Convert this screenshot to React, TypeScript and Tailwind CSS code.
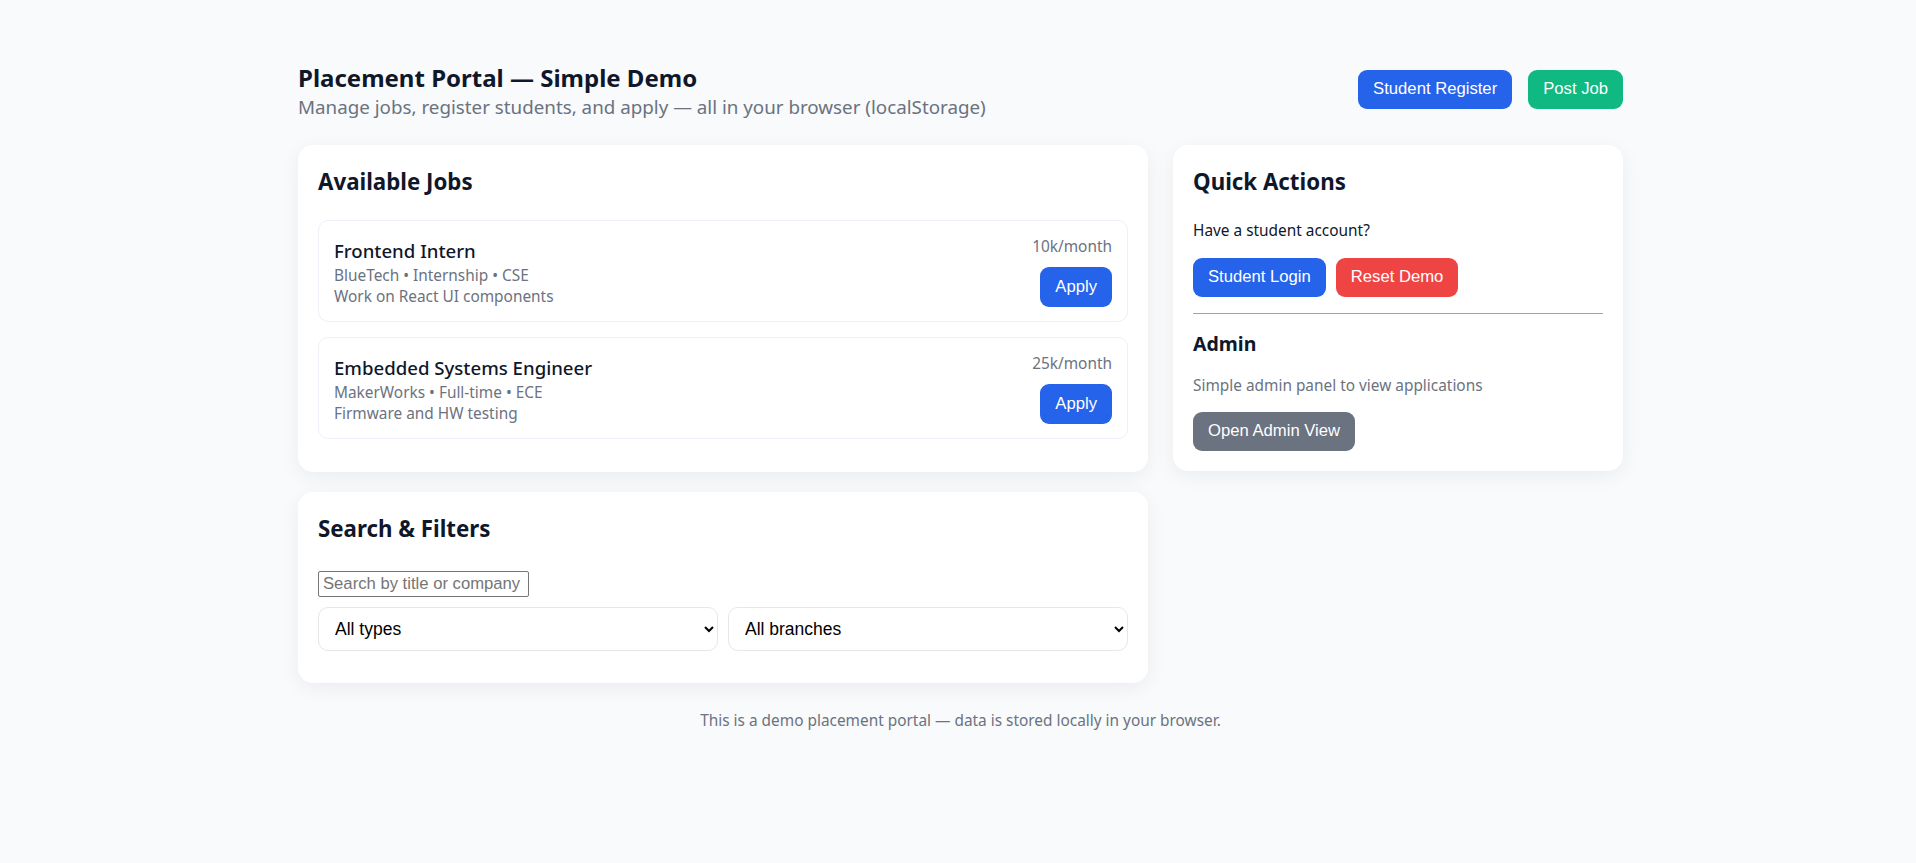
const jobs = [
  { title: "Frontend Intern", meta: "BlueTech • Internship • CSE", desc: "Work on React UI components", pay: "10k/month" },
  { title: "Embedded Systems Engineer", meta: "MakerWorks • Full-time • ECE", desc: "Firmware and HW testing", pay: "25k/month" },
];

const btn = "h-[39px] px-[15px] rounded-[9px] text-white font-['Liberation_Sans',Arial,sans-serif] text-[16.67px] leading-none";
const card = "bg-white rounded-[15px] shadow-[0_5px_20px_rgba(15,23,42,0.06)] px-[20px] pt-[20px]";
const heading = "text-[22.3px] font-bold leading-[30px] mt-[2px]";

export default function App() {
  return (
    <div className="min-h-screen bg-[#f8fafc] font-['Noto_Sans',sans-serif] text-[#0f172a]">
      <div className="ml-[298px] w-[1325px] pt-[62px]">
        <header className="flex items-start justify-between">
          <div>
            <h1 className="text-[24px] font-bold leading-[32px]">Placement Portal — Simple Demo</h1>
            <p className="text-[18.8px] leading-[26px] text-[#6b7280]">
              Manage jobs, register students, and apply — all in your browser (localStorage)
            </p>
          </div>
          <div className="flex gap-[16px] mt-[8px]">
            <button className={`${btn} bg-[#2563eb]`}>Student Register</button>
            <button className={`${btn} bg-[#10b981]`}>Post Job</button>
          </div>
        </header>

        <div className="mt-[25px] grid grid-cols-[850px_450px] gap-[25px] items-start">
          <div className="flex flex-col gap-[20px]">
            <section className={`${card} pb-[33px]`}>
              <h2 className={`${heading} mb-[23px]`}>Available Jobs</h2>
              <div className="flex flex-col gap-[15px]">
                {jobs.map((j) => (
                  <div key={j.title} className="flex items-start justify-between border border-[#edf0f7] rounded-[10px] px-[15px] pt-[16px] h-[102px]">
                    <div>
                      <div className="text-[18.6px] font-medium leading-[28px]">{j.title}</div>
                      <div className="text-[15.4px] leading-[21px] text-[#6b7280]">{j.meta}</div>
                      <div className="text-[15.4px] leading-[21px] text-[#6b7280]">{j.desc}</div>
                    </div>
                    <div className="flex flex-col items-end">
                      <div className="text-[15.4px] leading-[20px] text-[#6b7280]">{j.pay}</div>
                      <button className={`${btn} h-[40px] bg-[#2563eb] mt-[10px]`}>Apply</button>
                    </div>
                  </div>
                ))}
              </div>
            </section>

            <section className={`${card} pb-[32px]`}>
              <h2 className={`${heading} mb-[27px]`}>Search &amp; Filters</h2>
              <input
                placeholder="Search by title or company"
                className="block w-[211px] h-[26px] border border-[#767676] rounded-[2px] px-[4px] font-['Liberation_Sans',Arial,sans-serif] text-[16.67px] placeholder:text-[#757575]"
              />
              <div className="mt-[10px] grid grid-cols-2 gap-[10px]">
                <select className="h-[44px] border border-[#e5e7eb] rounded-[10px] px-[12px] font-['Liberation_Sans',Arial,sans-serif] text-[17.5px] text-black bg-white">
                  <option>All types</option>
                </select>
                <select className="h-[44px] border border-[#e5e7eb] rounded-[10px] px-[12px] font-['Liberation_Sans',Arial,sans-serif] text-[17.5px] text-black bg-white">
                  <option>All branches</option>
                </select>
              </div>
            </section>
          </div>

          <aside className={`${card} pb-[20px]`}>
            <h2 className={heading}>Quick Actions</h2>
            <p className="mt-[24px] text-[15.4px] leading-[20px]">Have a student account?</p>
            <div className="mt-[17px] flex gap-[10px]">
              <button className={`${btn} bg-[#2563eb]`}>Student Login</button>
              <button className={`${btn} bg-[#ef4444]`}>Reset Demo</button>
            </div>
            <hr className="mt-[16px] border-t border-[#9ca3af]" />
            <h3 className="mt-[17px] text-[19.5px] font-bold leading-[26px]">Admin</h3>
            <p className="mt-[19px] text-[15.4px] leading-[20px] text-[#6b7280]">Simple admin panel to view applications</p>
            <button className={`${btn} mt-[16px] bg-[#6b7280]`}>Open Admin View</button>
          </aside>
        </div>

        <footer className="mt-[28px] text-center text-[15.4px] leading-[20px] text-[#6b7280]">
          This is a demo placement portal — data is stored locally in your browser.
        </footer>
      </div>
    </div>
  );
}
